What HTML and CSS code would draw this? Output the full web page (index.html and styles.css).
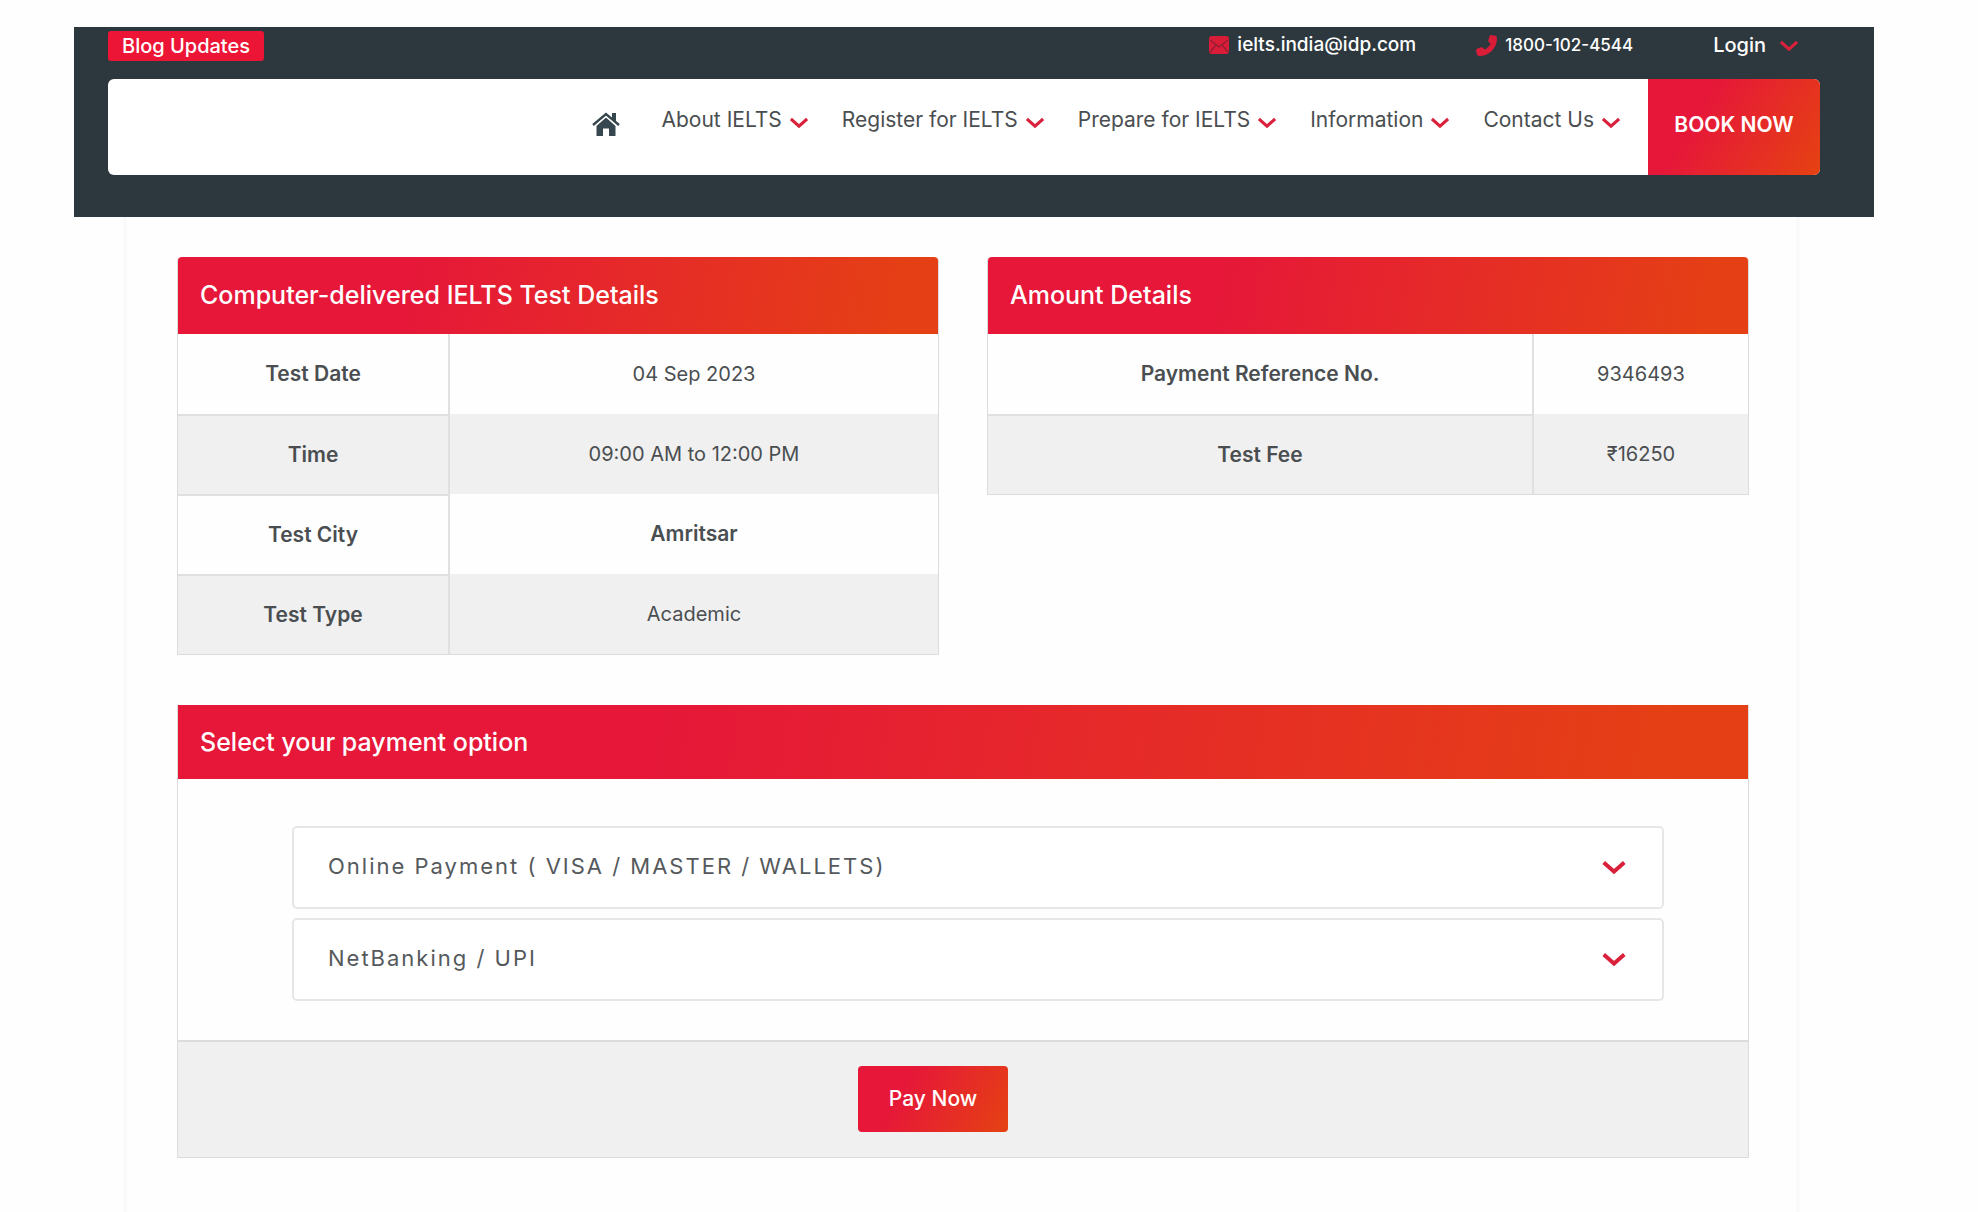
FILE: index.html
```html
<!DOCTYPE html>
<html lang="en">
<head>
    <meta charset="UTF-8">
    <meta name="viewport" content="width=device-width, initial-scale=1.0">
    <title>IELTS Payment</title>
    <link rel="stylesheet" href="styles.css">
</head>
<body>
    <!-- shared icon shapes -->
    <svg class="sprite" aria-hidden="true">
        <symbol id="chevron" viewBox="0 0 20 14">
            <path d="M1 3 L10 11 L19 3" fill="none" stroke="currentColor" stroke-width="3.4"/>
        </symbol>
    </svg>

    <header class="site-header">
        <div class="top-bar">
            <a class="blog-link" href="#">Blog Updates</a>
            <a class="top-link mail-link" href="#">
                <svg class="icon-top" viewBox="0 0 20 18">
                    <rect x="0" y="0" width="20" height="18" rx="3" fill="#d91c38"/>
                    <path d="M1 4 L10 11 L19 4 M1 16 L7 9 M19 16 L13 9" fill="none" stroke="#8d1f33" stroke-width="1.2"/>
                </svg>
                ielts.india@idp.com
            </a>
            <a class="top-link phone-link" href="#">
                <svg class="icon-phone" viewBox="0 0 20 20">
                    <path d="M14 0 L18.6 .8 Q20 1.200 20 3 C20 12.500 12.500 20 3 20 Q1.300 20 .9 18.600 L0 14.800 Q-.2 13.700 1 13.200 L5 11.700 Q6 11.400 6.700 12.200 L8.300 14 Q12 12 14 8.300 L12.200 6.700 Q11.400 6 11.800 5 L13 1 Q13.300 .2 14 0Z" fill="#d91c38"/>
                </svg>
                1800-102-4544
            </a>
            <a class="top-link login-link" href="#">
                Login
                <svg class="chevron"><use href="#chevron"/></svg>
            </a>
        </div>

        <div class="nav-box">
            <nav class="main-nav">
                <a class="home-link" href="#" aria-label="Home">
                    <svg class="icon-home" viewBox="0 0 28 24">
                        <path d="M14 5.500 L23.500 14 V24 H17 V16.500 H11 V24 H4.500 V14 Z" fill="#37474f"/>
                        <path d="M1 13 L14 2 L27 13" fill="none" stroke="#37474f" stroke-width="2.400"/>
                        <path d="M20 1 H24 V10.500 L20 7 Z" fill="#37474f"/>
                        <path d="M3 14 L14 4.500 L25 14" fill="none" stroke="#fff" stroke-width="1"/>
                    </svg>
                </a>
                <a href="#">About IELTS <svg class="chevron"><use href="#chevron"/></svg></a>
                <a href="#">Register for IELTS <svg class="chevron"><use href="#chevron"/></svg></a>
                <a href="#">Prepare for IELTS <svg class="chevron"><use href="#chevron"/></svg></a>
                <a href="#">Information <svg class="chevron"><use href="#chevron"/></svg></a>
                <a href="#">Contact Us <svg class="chevron"><use href="#chevron"/></svg></a>
            </nav>
            <a class="book-btn" href="#">BOOK NOW</a>
        </div>
    </header>

    <main class="content">
        <div class="details">
            <section class="card">
                <h2 class="card-title">Computer-delivered IELTS Test Details</h2>
                <table class="info-table">
                    <tr><th scope="row">Test Date</th><td>04 Sep 2023</td></tr>
                    <tr><th scope="row">Time</th><td>09:00 AM to 12:00 PM</td></tr>
                    <tr><th scope="row">Test City</th><td><strong>Amritsar</strong></td></tr>
                    <tr><th scope="row">Test Type</th><td>Academic</td></tr>
                </table>
            </section>

            <section class="card">
                <h2 class="card-title">Amount Details</h2>
                <table class="info-table amount-table">
                    <tr><th scope="row">Payment Reference No.</th><td>9346493</td></tr>
                    <tr><th scope="row">Test Fee</th><td>₹16250</td></tr>
                </table>
            </section>
        </div>

        <section class="card payment">
            <h2 class="card-title">Select your payment option</h2>
            <div class="options">
                <button type="button" class="option">
                    Online Payment ( VISA / MASTER / WALLETS)
                    <svg class="chevron"><use href="#chevron"/></svg>
                </button>
                <button type="button" class="option">
                    NetBanking / UPI
                    <svg class="chevron"><use href="#chevron"/></svg>
                </button>
            </div>
            <div class="pay-bar">
                <button type="submit" class="pay-btn">Pay Now</button>
            </div>
        </section>
    </main>
</body>
</html>
```

FILE: styles.css
```css
* {
    box-sizing: border-box;
}

body {
    margin: 0;
    padding: 27px 104px 0 74px;
    min-height: 100vh;
    display: flex;
    flex-direction: column;
    background: #fefefe;
    color: #4a4e51;
    font-family: Inter, "Liberation Sans", sans-serif;
    font-size: 21px;
    line-height: 28px;
}

a {
    color: inherit;
    text-decoration: none;
}

.sprite {
    display: none;
}

.chevron {
    width: 18px;
    height: 13px;
    flex: none;
    color: #d9213b;
}

/* Header */
.site-header {
    padding: 4px 54px 42px 34px;
    background: #2d383e;
}

.top-bar {
    display: flex;
    align-items: flex-start;
    margin-bottom: 18px;
    padding-right: 22px;
    color: #fff;
    font-weight: 500;
}

.blog-link {
    margin-right: auto;
    padding: 1px 14px;
    border-radius: 3px;
    background: #ed1536;
    font-size: 20px;
}

.top-link {
    display: flex;
    align-items: center;
    gap: 8px;
    margin-left: 60px;
}

.mail-link {
    font-size: 19px;
}

.phone-link {
    font-size: 17px;
}

.login-link {
    gap: 14px;
    margin-left: 80px;
    font-size: 20px;
}

.icon-top {
    width: 20px;
    height: 18px;
}

.icon-phone {
    width: 21px;
    height: 21px;
}

.nav-box {
    display: flex;
    justify-content: flex-end;
    height: 96px;
    border-radius: 6px;
    background: #fff;
    overflow: hidden;
}

.main-nav {
    display: flex;
    align-items: center;
    gap: 34px;
    padding: 0 28px 14px 0;
    white-space: nowrap;
}

.main-nav a {
    display: flex;
    align-items: center;
    gap: 8px;
}

.main-nav .chevron {
    margin-top: 4px;
}

.main-nav .home-link {
    margin-right: 8px;
    padding-top: 8px;
}

.icon-home {
    width: 28px;
    height: 24px;
}

.book-btn {
    display: flex;
    align-items: center;
    justify-content: center;
    width: 172px;
    padding-bottom: 4px;
    background: linear-gradient(120deg, #e61739 30%, #e54212);
    color: #fff;
    font-weight: 600;
}

/* Content */
.content {
    flex: 1;
    margin: 0 74px 0 49px;
    padding: 40px 47px 50px 50px;
    border: solid #fafafa;
    border-width: 0 4px;
}

.details {
    display: grid;
    grid-template-columns: 1fr 1fr;
    align-items: start;
    gap: 48px;
    margin-bottom: 50px;
}

.card {
    border: 1px solid #dcdcdc;
    border-top: 0;
    border-radius: 4px 4px 0 0;
}

.card-title {
    margin: 0;
    padding: 23px 22px 24px;
    border-radius: 4px 4px 0 0;
    background: linear-gradient(100deg, #e61739 30%, #e54015 95%);
    color: #fff;
    font-size: 25px;
    font-weight: 500;
    line-height: 30px;
}

.info-table {
    width: 100%;
    table-layout: fixed;
    border-spacing: 0;
    text-align: center;
}

.info-table th,
.info-table td {
    height: 80px;
    padding: 0;
}

.info-table td {
    font-size: 20px;
}

.info-table th {
    width: 272px;
    border-right: 2px solid #e0e0e0;
    font-weight: 600;
}

.info-table tr + tr th {
    border-top: 2px solid #e0e0e0;
}

.amount-table th {
    width: 546px;
}

.info-table strong {
    font-size: 21px;
    font-weight: 600;
}

.info-table tr:nth-child(even) {
    background: #f0f0f0;
}

/* Payment options */
.payment,
.payment .card-title {
    border-radius: 0;
}

.payment .card-title {
    padding: 22px;
}

.options {
    display: flex;
    flex-direction: column;
    gap: 9px;
    padding: 47px 84px 39px 114px;
}

.option {
    display: flex;
    align-items: center;
    justify-content: space-between;
    height: 83px;
    padding: 0 36px 4px 34px;
    border: 2px solid #e6e6e6;
    border-radius: 5px;
    background: #fff;
    color: #55595c;
    font: inherit;
    font-size: 22px;
    letter-spacing: 2px;
    text-align: left;
}

.option .chevron {
    width: 24px;
    height: 16px;
    margin-top: 2px;
}

.pay-bar {
    display: flex;
    justify-content: center;
    padding: 24px 60px 25px 0;
    border-top: 2px solid #dcdcdc;
    background: #f0f0f0;
}

.pay-btn {
    width: 150px;
    height: 66px;
    border: 0;
    border-radius: 4px;
    background: linear-gradient(120deg, #e61739 30%, #e54212);
    color: #fff;
    font: inherit;
    font-weight: 500;
}
```
